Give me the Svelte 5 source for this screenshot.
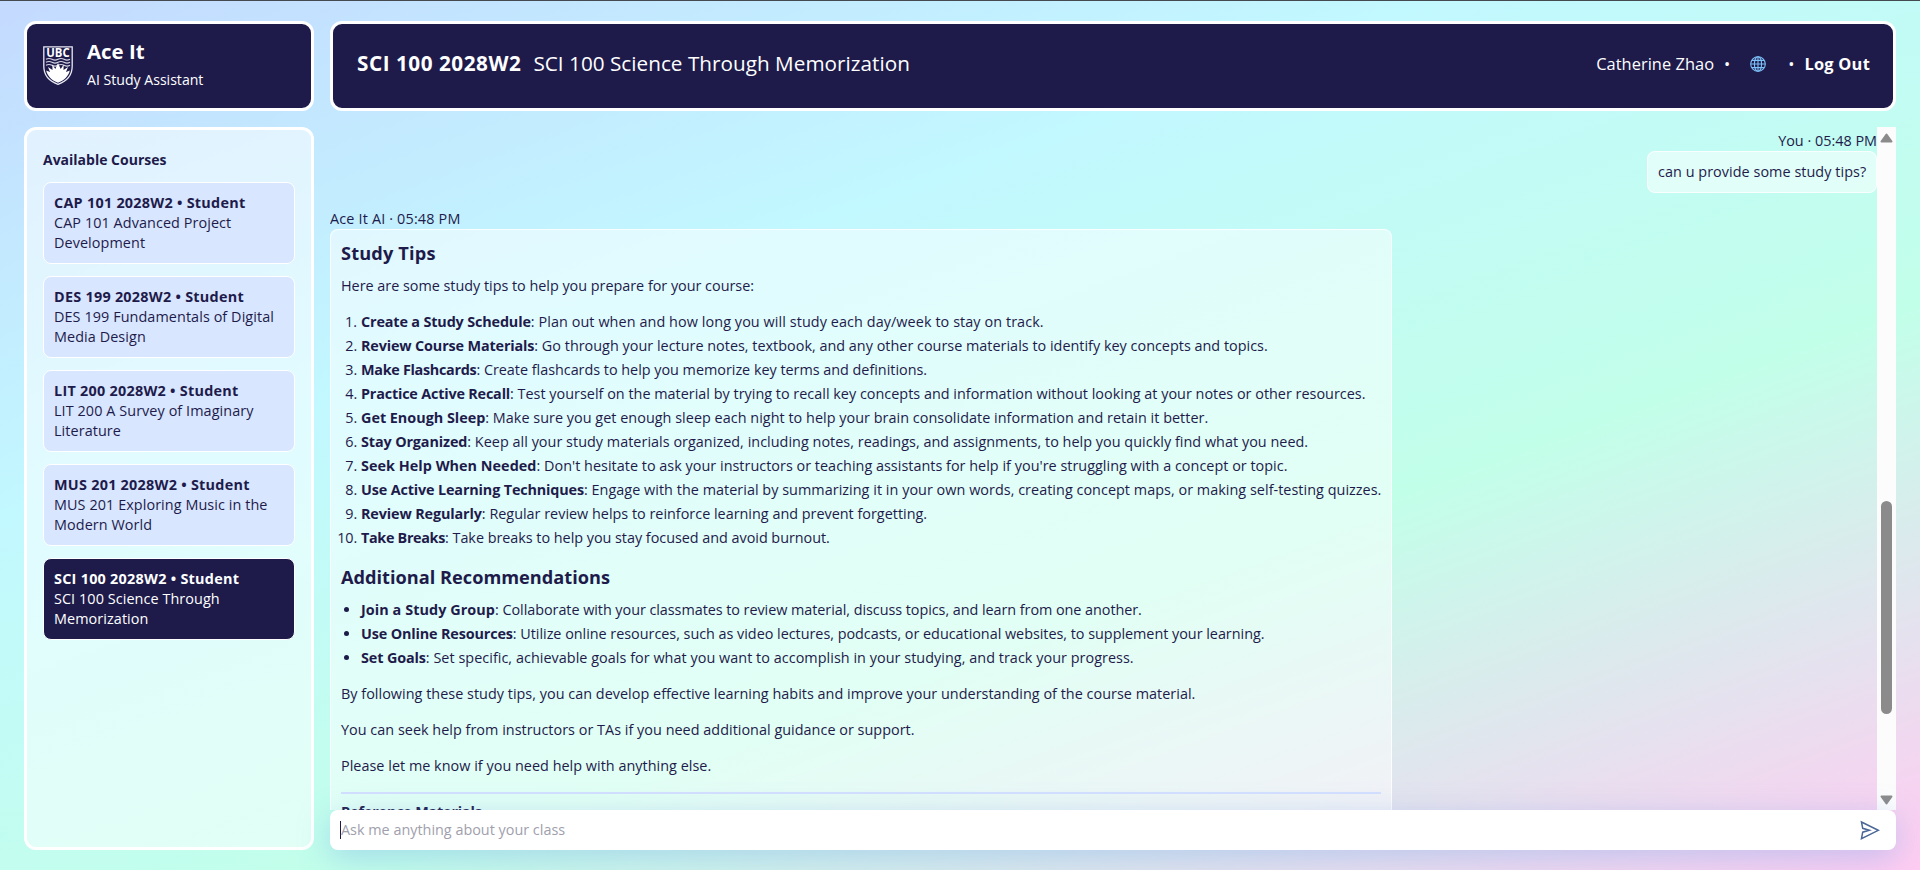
<script>
  const courses = [
    ['CAP 101 2028W2', 'CAP 101 Advanced Project Development'],
    ['DES 199 2028W2', 'DES 199 Fundamentals of Digital Media Design'],
    ['LIT 200 2028W2', 'LIT 200 A Survey of Imaginary Literature'],
    ['MUS 201 2028W2', 'MUS 201 Exploring Music in the Modern World'],
    ['SCI 100 2028W2', 'SCI 100 Science Through Memorization'],
  ];
  // Each entry: name, text, tracking of the name (px), tracking of the text (px)
  const tips = [
    ['Create a Study Schedule', 'Plan out when and how long you will study each day/week to stay on track.', -0.15, 0.08],
    ['Review Course Materials', 'Go through your lecture notes, textbook, and any other course materials to identify key concepts and topics.', -0.15, 0.01],
    ['Make Flashcards', 'Create flashcards to help you memorize key terms and definitions.', -0.3, -0.02],
    ['Practice Active Recall', 'Test yourself on the material by trying to recall key concepts and information without looking at your notes or other resources.', -0.19, 0.01],
    ['Get Enough Sleep', 'Make sure you get enough sleep each night to help your brain consolidate information and retain it better.', -0.02, 0.03],
    ['Stay Organized', 'Keep all your study materials organized, including notes, readings, and assignments, to help you quickly find what you need.', -0.13, 0.03],
    ['Seek Help When Needed', "Don't hesitate to ask your instructors or teaching assistants for help if you're struggling with a concept or topic.", 0.03, 0.02],
    ['Use Active Learning Techniques', 'Engage with the material by summarizing it in your own words, creating concept maps, or making self-testing quizzes.', -0.15, 0.035],
    ['Review Regularly', 'Regular review helps to reinforce learning and prevent forgetting.', -0.13, 0],
    ['Take Breaks', 'Take breaks to help you stay focused and avoid burnout.', -0.33, -0.03],
  ];
  const extras = [
    ['Join a Study Group', 'Collaborate with your classmates to review material, discuss topics, and learn from one another.', 0.07, -0.05],
    ['Use Online Resources', 'Utilize online resources, such as video lectures, podcasts, or educational websites, to supplement your learning.', -0.15, -0.025],
    ['Set Goals', 'Set specific, achievable goals for what you want to accomplish in your studying, and track your progress.', -0.13, 0.04],
  ];
</script>

{#snippet point([name, text, nameTracking, textTracking])}
  <li style:letter-spacing="{textTracking}px"><b style:letter-spacing="{nameTracking}px">{name}</b>: {text}</li>
{/snippet}

<div class="page">
  <aside>
    <div class="brand panel">
      <svg width="30" height="39" viewBox="0 0 30 39">
        <path d="M.8.8h28.4v19.5c0 9-5.6 15-14.2 18C6.400 35.300.8 29.300.8 20.300z" fill="none" stroke="#e8e8f2" stroke-width="1.3" />
        <g fill="none" stroke="#d4d4e4" stroke-width="1.2">
          <path d="M3 13.300q3-1.600 6 0t6 0 6 0 6 0M3 16.300q3-1.600 6 0t6 0 6 0 6 0M3 19.300q3-1.600 6 0t6 0 6 0 6 0" />
        </g>
        <path d="M3.200 24.500 7 26 5 21l4.500 3L9.300 18.500l3 4.500L15 17l2.700 6 3-4.500-.2 5.500 4.500-3-2 5 3.800-1.500C25.500 30.500 21 34.300 15 36.800 9 34.300 4.500 30.500 3.200 24.500z" fill="#fff" />
        <text x="15" y="10.900" text-anchor="middle" textLength="23.500" lengthAdjust="spacingAndGlyphs" font-size="11.500" font-weight="700" fill="#fff">UBC</text>
      </svg>
      <div class="brand-text">
        <h1>Ace It</h1>
        <p>AI Study Assistant</p>
      </div>
    </div>
    <nav class="panel">
      <h2>Available Courses</h2>
      {#each courses as [code, title], i}
        <div class="course" class:active={i === 4}>
          <b>{code} • Student</b>
          <span>{title}</span>
        </div>
      {/each}
    </nav>
  </aside>

  <main>
    <header class="panel">
      <div class="heading"><b>SCI 100 2028W2</b><span>SCI 100 Science Through Memorization</span></div>
      <div class="user">
        <span class="name">Catherine Zhao</span>
        <span class="dot first">•</span>
        <svg width="16" height="16" viewBox="0 0 16 16" fill="none" stroke="#7cc0f8" stroke-width="1.1">
          <circle cx="8" cy="8" r="7.300" />
          <ellipse cx="8" cy="8" rx="3.600" ry="7.300" />
          <path d="M8 .7v14.600M.7 8h14.600M1.800 4.400h12.400M1.800 11.600h12.400" />
        </svg>
        <span class="dot">•</span>
        <b class="logout">Log Out</b>
      </div>
    </header>

    <section class="chat">
      <div class="messages">
        <div class="from me">You · 05:48 PM</div>
        <div class="bubble mine">can u provide some study tips?</div>
        <div class="from ai">Ace It AI · 05:48 PM</div>
        <div class="bubble reply">
          <h3 class="first-title">Study Tips</h3>
          <p>Here are some study tips to help you prepare for your course:</p>
          <ol>
            {#each tips as tip}
              {@render point(tip)}
            {/each}
          </ol>
          <h3>Additional Recommendations</h3>
          <ul>
            {#each extras as extra}
              {@render point(extra)}
            {/each}
          </ul>
          <p class="follow">By following these study tips, you can develop effective learning habits and improve your understanding of the course material.</p>
          <p class="seek">You can seek help from instructors or TAs if you need additional guidance or support.</p>
          <p class="let">Please let me know if you need help with anything else.</p>
          <div class="refs">Reference Materials</div>
        </div>
      </div>
      <div class="scrollbar">
        <svg width="13" height="10" viewBox="0 0 13 10"><path d="M6.500 1.500 11.500 8.500h-10z" fill="#8b8b8b" stroke="#8b8b8b" stroke-width="2" stroke-linejoin="round" /></svg>
        <div class="thumb"></div>
        <svg width="13" height="10" viewBox="0 0 13 10"><path d="M6.500 8.500 11.500 1.500h-10z" fill="#8b8b8b" stroke="#8b8b8b" stroke-width="2" stroke-linejoin="round" /></svg>
      </div>
    </section>

    <div class="ask">
      <i class="caret"></i>
      <span>Ask me anything about your class</span>
      <svg width="20" height="21" viewBox="0 0 20 21" fill="none" stroke="#4a6797" stroke-width="1.500" stroke-linejoin="miter">
        <path d="M1.500 2 18.300 10.300 1.500 18.700 2.700 12.200 9.300 10.300 2.700 8.300z" />
      </svg>
    </div>
  </main>
</div>

<style>
  :global(body) { margin: 0; }
  * { box-sizing: border-box; }
  h1, h2, h3, p, ol, ul { margin: 0; }
  .page {
    height: 870px;
    padding: 20px 24px;
    border-top: 1px solid #444a50;
    display: flex;
    gap: 16px;
    overflow: hidden;
    font-family: "Open Sans", "Noto Sans", sans-serif;
    font-size: 14.400px;
    line-height: 20px;
    color: #1e1b4b;
    background: linear-gradient(160deg, #c4daff, #c2f8ff 33%, #c2ffe9 64%, #ffccf2);
  }
  aside { width: 290px; display: flex; flex-direction: column; gap: 16px; }
  main { width: 1566px; display: flex; flex-direction: column; }
  .panel { border: 3px solid #fff; border-radius: 12px; }
  .brand, header { height: 90px; flex: none; background: #1e1b4b; color: #fff; display: flex; }
  .brand { padding: 11px 16px; gap: 14px; }
  .brand svg { margin-top: 11px; flex: none; }
  h1 { font-size: 20.400px; line-height: 32px; }
  .brand-text p { font-size: 14.100px; line-height: 26px; }
  nav { flex: 1; background: rgba(255, 255, 255, 0.5); padding: 19px 16px; }
  h2 { font-size: 14px; line-height: 20px; margin: 1px 0 12px; }
  .course {
    height: 82px;
    margin-bottom: 12px;
    border: 1px solid #fff;
    border-radius: 8px;
    background: #d8e6ff;
    padding: 10px;
    letter-spacing: 0.08px;
  }
  .course b { display: block; white-space: nowrap; letter-spacing: 0.26px; }
  .course span { display: block; }
  .course.active { background: #1e1b4b; color: #fff; }

  header { padding: 0 23px 0 24px; align-items: center; justify-content: space-between; }
  .heading { display: flex; gap: 12px; font-size: 20.700px; line-height: 28px; margin-top: -6px; letter-spacing: 0.03px; }
  .heading b { letter-spacing: 0.54px; }
  .user { display: flex; align-items: center; font-size: 16.400px; margin-top: -4px; }
  .user .name { letter-spacing: 0.04px; }
  .user svg { margin: 0 22px 0 20px; }
  .dot.first { margin-left: 10px; }
  .logout { margin-left: 10px; letter-spacing: 0.25px; }

  .chat { margin-top: 16px; height: 683px; display: flex; overflow: hidden; }
  .messages { width: 1547px; padding-top: 4px; display: flex; flex-direction: column; align-items: flex-start; white-space: nowrap; }
  .from.me { align-self: flex-end; }
  .from.ai { letter-spacing: 0.17px; }
  .bubble { border: 1px solid rgba(255, 255, 255, 0.8); border-radius: 8px; background: rgba(255, 255, 255, 0.5); padding: 10px; }
  .mine { align-self: flex-end; width: 230px; height: 42px; margin-bottom: 16px; letter-spacing: 0.05px; }
  .reply { width: 1062px; height: 700px; flex: none; line-height: 24px; padding-top: 9px; }
  h3 { font-size: 18.200px; line-height: 28px; }
  .first-title { letter-spacing: 0.15px; }
  .reply p { margin-top: 7px; letter-spacing: -0.02px; }
  ol, ul { padding-left: 20px; }
  ol { margin: 12px 0 13px; }
  ul { margin: 7px 0 12px; }
  .reply p.follow, .reply p.seek, .reply p.let { margin: 0 0 12px; letter-spacing: 0.025px; }
  .refs { margin-top: 14px; border-top: 2px solid #d4dfff; padding-top: 6px; font-weight: 700; letter-spacing: -0.2px; }
  .scrollbar { width: 19px; background: #fcfcfc; display: flex; flex-direction: column; align-items: center; padding: 6px 0 5px; }
  .thumb { width: 11px; height: 213px; border-radius: 6px; background: #8b8b8b; margin: 358px 0 auto; }

  .ask {
    position: relative;
    height: 40px;
    border-radius: 8px;
    background: #fff;
    box-shadow: 0 8px 32px rgba(110, 160, 235, 0.38);
    display: flex;
    align-items: center;
    padding: 0 16px 0 10px;
    color: #a0a0ad;
  }
  .caret { width: 1px; height: 18px; background: #1e1b4b; }
  .ask svg { margin-left: auto; }
</style>
